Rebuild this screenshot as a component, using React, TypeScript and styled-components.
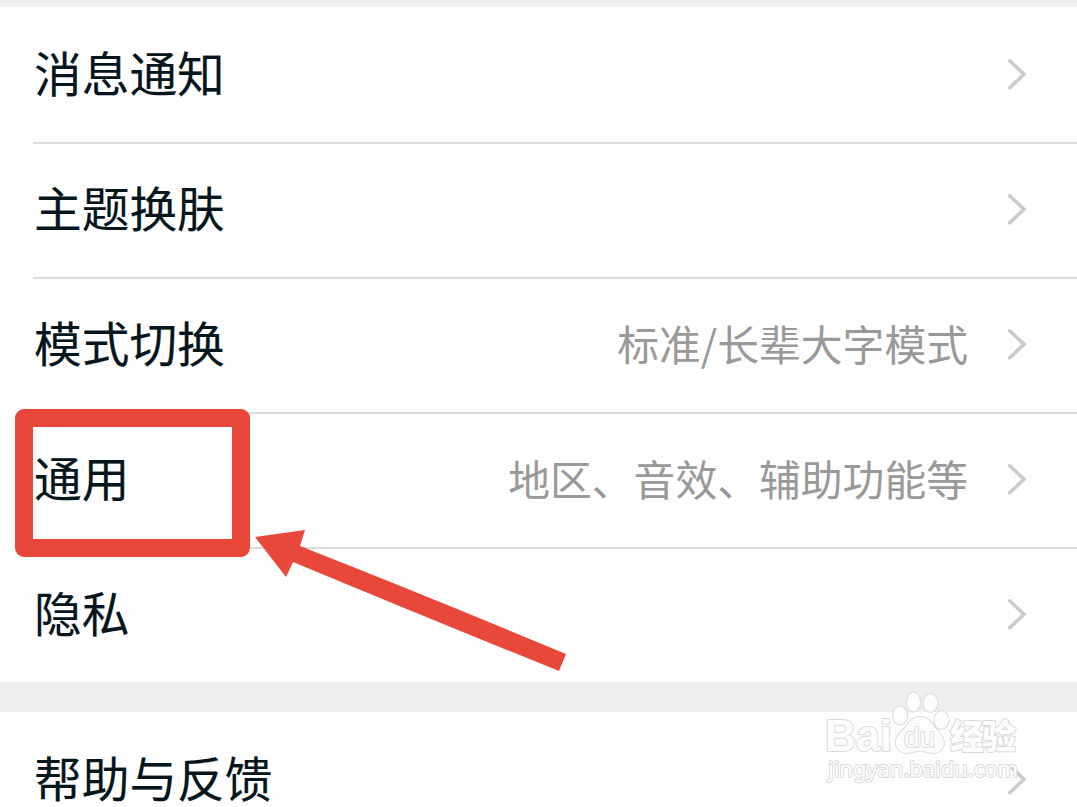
import styled, { createGlobalStyle } from 'styled-components'

const GlobalStyle = createGlobalStyle`
  html,
  body {
    margin: 0;
    background: #fefefe;
    overflow: hidden;
  }
`

const Page = styled.main`
  position: relative;
  display: flex;
  flex-direction: column;
  width: 1077px;
  height: 807px;
  overflow: hidden;
  background: #fefefe;
  font-family: 'Noto Sans CJK SC', sans-serif;
`

const Divider = styled.div<{ $height: number }>`
  flex: none;
  height: ${p => p.$height}px;
  background: #eeeeee;
`

const List = styled.section`
  flex: none;
  padding-left: 33px;
`

const Row = styled.div<{ $line?: boolean }>`
  box-sizing: border-box;
  display: flex;
  align-items: center;
  height: 135px;
  padding: 0 49px 0 1px;
  box-shadow: ${p => (p.$line ? 'inset 0 2px 0 #dcdcdc' : 'none')};
`

const Label = styled.span`
  flex: 1;
  padding-bottom: 6px;
  color: #07161c;
  font-size: 47.7px;
  line-height: 60px;
  -webkit-text-stroke: 0.15px #07161c;
`

const Value = styled.span`
  margin-right: 38px;
  padding-bottom: 4px;
  color: #999999;
  font-size: 41.8px;
  line-height: 60px;
`

const Chevron = styled.svg`
  flex: none;
  width: 22px;
  height: 35px;
  fill: none;
  stroke: #cbcbcb;
  stroke-width: 3.6;
  stroke-linecap: round;
`

const Highlight = styled.div`
  position: absolute;
  left: 15px;
  top: 409px;
  box-sizing: border-box;
  width: 235px;
  height: 148px;
  border: 18px solid #e84839;
  border-radius: 9px;
`

const Arrow = styled.svg`
  position: absolute;
  left: 250px;
  top: 524px;
  fill: #e84839;
`

const Watermark = styled.svg`
  position: absolute;
  left: 817px;
  top: 685px;
  fill: #fdfdfd;
  stroke: #dadada;
  stroke-width: 2;
  stroke-linejoin: round;
  paint-order: stroke;
  font-family: 'Liberation Sans', 'Noto Sans CJK SC', sans-serif;
`

type Item = { label: string; value?: string }

const general: Item[] = [
  { label: '消息通知' },
  { label: '主题换肤' },
  { label: '模式切换', value: '标准/长辈大字模式' },
  { label: '通用', value: '地区、音效、辅助功能等' },
  { label: '隐私' },
]

const support: Item[] = [{ label: '帮助与反馈' }]

function Rows ({ items }: { items: Item[] }) {
  return (
    <List>
      {items.map((item, i) => (
        <Row key={item.label} $line={i > 0}>
          <Label>{item.label}</Label>
          {item.value && <Value>{item.value}</Value>}
          <Chevron viewBox='0 0 22 35'>
            <path d='M3.7 3.8 L18 17.3 L3.7 30.8' />
          </Chevron>
        </Row>
      ))}
    </List>
  )
}

export default function App () {
  return (
    <>
      <GlobalStyle />
      <Page>
        <Divider $height={7} />
        <Rows items={general} />
        <Divider $height={30} />
        <Rows items={support} />

        <Highlight />
        <Arrow width='320' height='150' viewBox='250 524 320 150'>
          <path d='M255 537 L305 530 L300 546 Q437 600 566 654 L559 671 Q430 619 293 562 L286 577 Z' />
        </Arrow>

        <Watermark width='212' height='105' viewBox='817 685 212 105'>
          <text
            x='825'
            y='751'
            fontSize='44'
            fontWeight='700'
            textLength='67'
            lengthAdjust='spacingAndGlyphs'
          >
            Bai
          </text>
          {/* paw */}
          <ellipse cx='900' cy='715.5' rx='7' ry='9' />
          <ellipse cx='913.5' cy='702' rx='6.5' ry='9.5' />
          <ellipse cx='930.5' cy='703' rx='7' ry='9' />
          <ellipse cx='941.5' cy='720' rx='7' ry='9' />
          <path d='M920 717 C910 717 908 726 901 732 C895 738 894 745 899 750 C906 756 911 751 920 751 C929 751 934 756 941 750 C947 744 943 737 938 731 C931 724 930 717 920 717 Z' />
          <text x='904' y='747' fontSize='28' textLength='31'>
            du
          </text>
          <text x='950' y='749' fontSize='34' fontWeight='900' textLength='66'>
            经验
          </text>
          <text
            x='828'
            y='777'
            fontSize='22'
            textLength='190'
            lengthAdjust='spacingAndGlyphs'
            fontFamily='Noto Sans, sans-serif'
          >
            jingyan.baidu.com
          </text>
        </Watermark>
      </Page>
    </>
  )
}
